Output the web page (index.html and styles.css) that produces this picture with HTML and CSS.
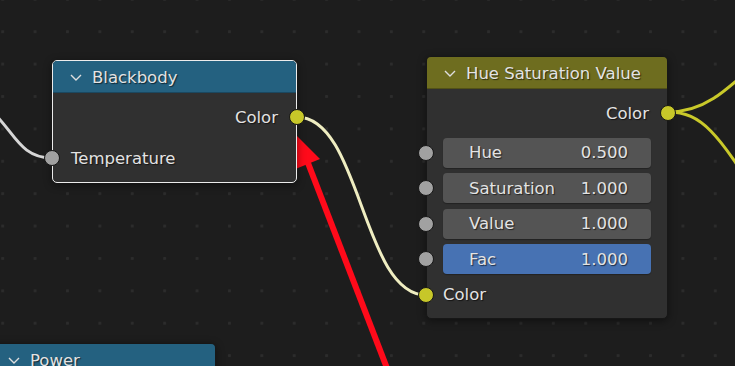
FILE: index.html
```html
<!DOCTYPE html>
<html lang="en">
<head>
    <meta charset="UTF-8">
    <title>Node Editor</title>
    <link rel="stylesheet" href="styles.css">
</head>
<body>
    <div class="editor">
        <!-- links and annotation, drawn under the nodes -->
        <svg class="wires" width="735" height="366" viewBox="0 0 735 366">
            <path class="link link-float" d="M -30 96 C 14 118, 12 158, 52 158"/>
            <path class="link link-selected" d="M 297 117 C 361 117, 362 295, 426 295"/>
            <path class="link link-color" d="M 668 112 C 702 112, 722 96, 770 50"/>
            <path class="link link-color" d="M 668 112 C 702 112, 718 134, 760 200"/>
            <line class="arrow-line" x1="390" y1="376" x2="308" y2="163"/>
            <polygon class="arrow-head" points="297,136 320,159 295.5,169"/>
        </svg>

        <div class="node node-blackbody selected">
            <div class="node-header header-converter">
                <svg class="chevron" width="12" height="7" viewBox="0 0 12 7"><polyline points="1,1 6,6 11,1"/></svg>
                <span>Blackbody</span>
            </div>
            <div class="node-body">
                <div class="row row-out">
                    <span>Color</span>
                    <i class="socket socket-color"></i>
                </div>
                <div class="row row-in spaced">
                    <i class="socket socket-float"></i>
                    <span>Temperature</span>
                </div>
            </div>
        </div>

        <div class="node node-hsv">
            <div class="node-header header-color">
                <svg class="chevron" width="12" height="7" viewBox="0 0 12 7"><polyline points="1,1 6,6 11,1"/></svg>
                <span>Hue Saturation Value</span>
            </div>
            <div class="node-body">
                <div class="row row-out">
                    <span>Color</span>
                    <i class="socket socket-color"></i>
                </div>
                <div class="inputs">
                    <div class="row row-field">
                        <i class="socket socket-float"></i>
                        <div class="field"><span>Hue</span><span>0.500</span></div>
                    </div>
                    <div class="row row-field">
                        <i class="socket socket-float"></i>
                        <div class="field"><span>Saturation</span><span>1.000</span></div>
                    </div>
                    <div class="row row-field">
                        <i class="socket socket-float"></i>
                        <div class="field"><span>Value</span><span>1.000</span></div>
                    </div>
                    <div class="row row-field">
                        <i class="socket socket-float"></i>
                        <div class="field field-fac"><span>Fac</span><span>1.000</span></div>
                    </div>
                    <div class="row row-field row-in">
                        <i class="socket socket-color"></i>
                        <span>Color</span>
                    </div>
                </div>
            </div>
        </div>

        <div class="node node-power">
            <div class="node-header header-converter">
                <svg class="chevron" width="12" height="7" viewBox="0 0 12 7"><polyline points="1,1 6,6 11,1"/></svg>
                <span>Power</span>
            </div>
        </div>
    </div>
</body>
</html>
```

FILE: styles.css
```css
body {
    margin: 0;
    background: #1d1d1d;
    font-family: "DejaVu Sans", "Liberation Sans", sans-serif;
}

/* Canvas */
.editor {
    position: relative;
    width: 735px;
    height: 366px;
    overflow: hidden;
    background-color: #1d1d1d;
    background-image: radial-gradient(circle, #2c2c2c 1.3px, transparent 1.9px);
    background-size: 32.4px 32.4px;
    background-position: -13.5px 15.5px;
}

.wires {
    position: absolute;
    left: 0;
    top: 0;
}

.link {
    fill: none;
    stroke-width: 3;
    stroke-linecap: round;
}

.link-float { stroke: #d6d6d6; }
.link-selected { stroke: #efedc1; }
.link-color { stroke: #c9c92a; }

.arrow-line {
    stroke: #ff0a1a;
    stroke-width: 6;
}

.arrow-head {
    fill: #ff0a1a;
}

/* Nodes */
.node {
    position: absolute;
    box-sizing: border-box;
    background: #303030;
    border: 1px solid #171717;
    border-radius: 5px;
    box-shadow: 0 2px 8px rgba(0, 0, 0, 0.45);
    color: #e3e3e3;
    font-size: 16.5px;
    text-shadow: 1px 1px 1px rgba(0, 0, 0, 0.6);
}

.node.selected {
    border-color: #ececec;
}

.node-blackbody {
    left: 52px;
    top: 60px;
    width: 245px;
}

.node-hsv {
    left: 426px;
    top: 56px;
    width: 242px;
}

.node-power {
    left: -10px;
    top: 343px;
    width: 226px;
    height: 60px;
}

.node-header {
    height: 32px;
    display: flex;
    align-items: center;
    gap: 10px;
    padding-left: 17px;
    border-radius: 4px 4px 0 0;
    box-shadow: inset 0 -1px 0 rgba(0, 0, 0, 0.25);
}

.header-converter { background: #246180; }
.header-color { background: #6e6d1f; }

.chevron {
    flex: none;
}

.chevron polyline {
    fill: none;
    stroke: #dedede;
    stroke-width: 1.4;
}

.node-body {
    padding: 6px 0 6px;
}

.node-hsv .node-body {
    padding-bottom: 5px;
}

/* Rows and sockets */
.row {
    position: relative;
    height: 36px;
    display: flex;
    align-items: center;
}

.row-out {
    justify-content: flex-end;
    padding-right: 18px;
}

.row-in {
    padding-left: 18px;
}

.spaced {
    margin-top: 5px;
}

.inputs {
    margin-top: 4px;
}

.row-field {
    height: 35.5px;
    padding: 0 16px;
}

.socket {
    position: absolute;
    top: 50%;
    width: 16px;
    height: 16px;
    margin-top: -8px;
    box-sizing: border-box;
    border: 1.5px solid #161616;
    border-radius: 50%;
}

.row-out .socket { right: -9px; }
.row-in .socket,
.row-field .socket { left: -9px; }

.socket-color { background: #c7c729; }
.socket-float { background: #a1a1a1; }

/* Value fields */
.field {
    flex: 1;
    height: 30px;
    display: flex;
    align-items: center;
    justify-content: space-between;
    padding: 0 23px 0 26px;
    background: #545454;
    border-radius: 4px;
    box-shadow: 0 1px 1px rgba(0, 0, 0, 0.3);
}

.field-fac {
    background: #4772b3;
}
```
